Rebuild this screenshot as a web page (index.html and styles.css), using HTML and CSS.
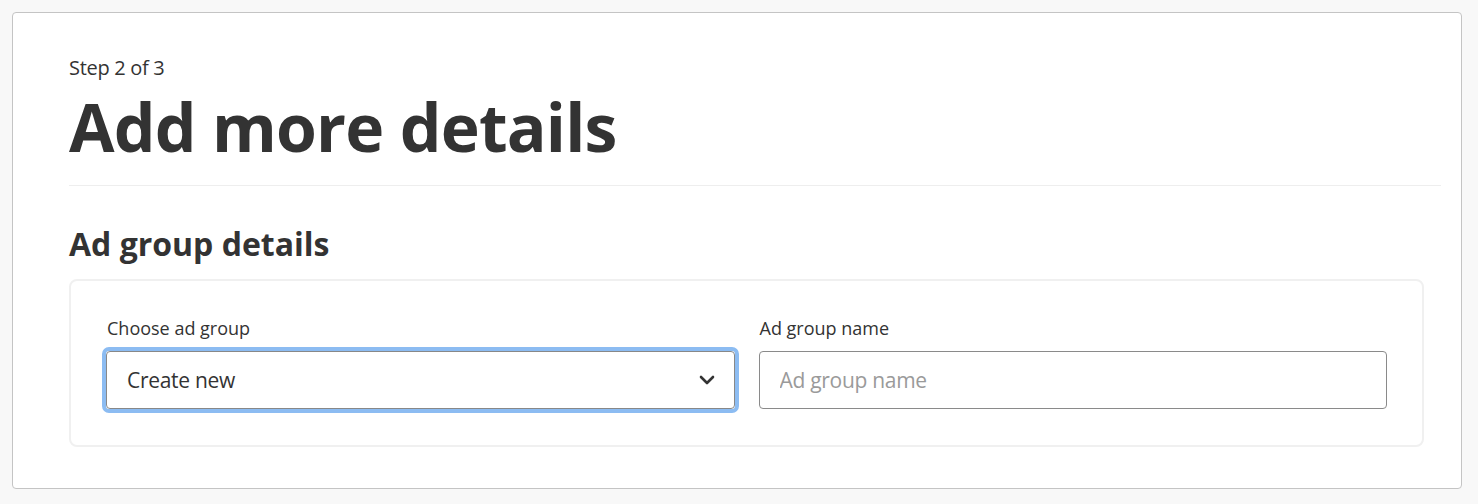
FILE: index.html
```html
<!DOCTYPE html>
<html>
<head>
    <meta charset="UTF-8">
    <title>Add more details</title>
    <link rel="stylesheet" href="styles.css">
</head>
<body>
    <div class="wizard_box">
        <div class="step_no">Step 2 of 3</div>
        <h1 class="step_title">Add more details</h1>
        <div class="divider"></div>
        <h2 class="section_title">Ad group details</h2>
        <div class="field_box">
            <div class="field">
                <label class="field_label">Choose ad group</label>
                <div class="select_wrap">
                    <div class="select_box">
                        <span>Create new</span>
                        <svg class="caret" width="18" height="12" viewBox="0 0 18 12">
                            <path d="M3 3 L9 9 L15 3" fill="none" stroke="#333" stroke-width="2.6" stroke-linecap="round" stroke-linejoin="round"/>
                        </svg>
                    </div>
                </div>
            </div>
            <div class="field">
                <label class="field_label">Ad group name</label>
                <input class="text_input" type="text" placeholder="Ad group name">
            </div>
        </div>
    </div>
</body>
</html>
```

FILE: styles.css
```css
body{
    margin:0;
    background:#f8f8f8;
    font-family:"Open Sans","Noto Sans",sans-serif;
    color:#333;
    padding:12px 16px 14px 12px;
}
.wizard_box{
    background:#fff;
    border:1px solid #c4c4c4;
    border-radius:4px;
    padding:42px 20px 0 56px;
    height:477px;
    box-sizing:border-box;
}
.step_no{
    font-size:20px;
    line-height:26px;
    letter-spacing:-0.3px;
}
.step_title{
    margin:0;
    font-size:66px;
    line-height:90px;
    font-weight:700;
    letter-spacing:-0.8px;
}
.divider{
    height:1px;
    background:#eee;
    margin-top:14px;
}
.section_title{
    margin:38px 0 0;
    font-size:32px;
    line-height:40px;
    font-weight:700;
    letter-spacing:0;
}
.field_box{
    margin-top:15px;
    margin-right:17px;
    border:2px solid #f0f0f0;
    border-radius:8px;
    padding:36px 35px 36px 35px;
    display:flex;
    gap:24px;
}
.field{
    flex:1;
    display:flex;
    flex-direction:column;
}
.field_label{
    font-size:18px;
    line-height:22px;
    margin-bottom:12px;
    padding-left:1px;
}
.select_wrap{
    border:4px solid #8cbcf2;
    border-radius:7px;
    margin:-4px;
}
.select_box{
    border:1px solid #888;
    border-radius:4px;
    height:56px;
    display:flex;
    align-items:center;
    justify-content:space-between;
    padding:0 18px 0 20px;
    font-size:21px;
    letter-spacing:-0.3px;
}
.caret{
    display:block;
}
.text_input{
    border:1px solid #8a8a8a;
    border-radius:4px;
    height:58px;
    box-sizing:border-box;
    padding:0 20px;
    font-family:inherit;
    font-size:21px;
    letter-spacing:-0.3px;
    color:#333;
    outline:none;
}
.text_input::placeholder{
    color:#9a9a9a;
}
```
